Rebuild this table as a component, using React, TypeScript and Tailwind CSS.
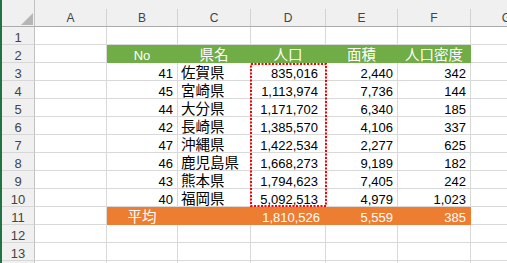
import React from "react";

const NUM = "font-['Liberation_Sans',Arial,sans-serif] text-[13px] leading-[13px]";
const JP = "font-['Noto_Sans_CJK_JP',sans-serif] text-[14.5px] leading-[17px]";

// column widths (A..G), each including its right gridline
const COLW = ["w-[72px]", "w-[71px]", "w-[73px]", "w-[75px]", "w-[72px]", "w-[73px]", "w-[72px]"];
const LETTERS = ["A", "B", "C", "D", "E", "F", "G"];

type Pref = { no: number; name: string; pop: string; area: string; density: string };

const rows: Pref[] = [
  { no: 41, name: "佐賀県", pop: "835,016", area: "2,440", density: "342" },
  { no: 45, name: "宮崎県", pop: "1,113,974", area: "7,736", density: "144" },
  { no: 44, name: "大分県", pop: "1,171,702", area: "6,340", density: "185" },
  { no: 42, name: "長崎県", pop: "1,385,570", area: "4,106", density: "337" },
  { no: 47, name: "沖縄県", pop: "1,422,534", area: "2,277", density: "625" },
  { no: 46, name: "鹿児島県", pop: "1,668,273", area: "9,189", density: "182" },
  { no: 43, name: "熊本県", pop: "1,794,623", area: "7,405", density: "242" },
  { no: 40, name: "福岡県", pop: "5,092,513", area: "4,979", density: "1,023" },
];

function RowHead({ n }: { n: number }) {
  return (
    <div className="w-[33px] h-[18px] shrink-0 bg-[#f0f0f0] border-r border-b border-r-[#c2c2c2] border-b-[#d7d7d7] flex items-end justify-center">
      <span className={`${NUM} text-[#444]`}>{n}</span>
    </div>
  );
}

function Cell({
  i,
  children,
  fill,
  align = "justify-end",
}: {
  i: number;
  children?: React.ReactNode;
  fill?: "green" | "orange";
  align?: string;
}) {
  const tone =
    fill === "green"
      ? "bg-[#70ad47] border-[#70ad47] text-white"
      : fill === "orange"
      ? "bg-[#ed7d31] border-[#ed7d31] text-white"
      : "bg-white border-[#d9d9d9] text-black";
  return (
    <div className={`${COLW[i]} h-[18px] shrink-0 border-r border-b flex items-end overflow-hidden whitespace-nowrap ${align} ${tone}`}>
      {children}
    </div>
  );
}

function EmptyRow({ n }: { n: number }) {
  return (
    <div className="flex">
      <RowHead n={n} />
      {COLW.map((_, i) => (
        <Cell key={i} i={i} />
      ))}
    </div>
  );
}

export default function App() {
  return (
    <div className="w-[507px] h-[263px] overflow-hidden bg-white flex">
      <div className="w-[2px] shrink-0 bg-[#217346]" />
      <div className="relative flex-1 flex flex-col overflow-hidden">
        {/* column headers */}
        <div className="flex h-[27px] shrink-0 bg-[#f0f0f0] border-b border-[#ababab]">
          <div className="w-[33px] shrink-0 border-r border-[#c2c2c2] flex items-end justify-end pr-[1px] pb-[1px]">
            <svg width="12" height="12" viewBox="0 0 12 12">
              <polygon points="12,0 12,12 0,12" fill="#b5b5b5" />
            </svg>
          </div>
          {LETTERS.map((l, i) => (
            <div key={l} className={`${COLW[i]} shrink-0 flex items-end`}>
              <div className="flex-1 h-[17px] flex items-center justify-center border-r border-[#d2d2d2]">
                <span className="font-['Liberation_Sans',Arial,sans-serif] text-[12px] leading-[12px] text-[#444]">{l}</span>
              </div>
            </div>
          ))}
        </div>

        <EmptyRow n={1} />

        {/* table header */}
        <div className="flex">
          <RowHead n={2} />
          <Cell i={0} />
          <Cell i={1} fill="green" align="justify-center">
            <span className={NUM}>No</span>
          </Cell>
          <Cell i={2} fill="green" align="justify-center">
            <span className={JP}>県名</span>
          </Cell>
          <Cell i={3} fill="green" align="justify-center">
            <span className={JP}>人口</span>
          </Cell>
          <Cell i={4} fill="green" align="justify-center">
            <span className={JP}>面積</span>
          </Cell>
          <Cell i={5} fill="green" align="justify-center">
            <span className={JP}>人口密度</span>
          </Cell>
          <Cell i={6} />
        </div>

        {rows.map((r, k) => (
          <div key={r.name} className="flex">
            <RowHead n={k + 3} />
            <Cell i={0} />
            <Cell i={1}>
              <span className={`${NUM} pr-[4px]`}>{r.no}</span>
            </Cell>
            <Cell i={2} align="justify-start">
              <span className={`${JP} pl-[3px]`}>{r.name}</span>
            </Cell>
            <Cell i={3}>
              <span className={`${NUM} pr-[7px]`}>{r.pop}</span>
            </Cell>
            <Cell i={4}>
              <span className={`${NUM} pr-[4px]`}>{r.area}</span>
            </Cell>
            <Cell i={5}>
              <span className={`${NUM} pr-[4px]`}>{r.density}</span>
            </Cell>
            <Cell i={6} />
          </div>
        ))}

        {/* average row */}
        <div className="flex">
          <RowHead n={11} />
          <Cell i={0} />
          <Cell i={1} fill="orange" align="justify-center">
            <span className={JP}>平均</span>
          </Cell>
          <Cell i={2} fill="orange" />
          <Cell i={3} fill="orange">
            <span className={`${NUM} pr-[5px]`}>1,810,526</span>
          </Cell>
          <Cell i={4} fill="orange">
            <span className={`${NUM} pr-[4px]`}>5,559</span>
          </Cell>
          <Cell i={5} fill="orange">
            <span className={`${NUM} pr-[4px]`}>385</span>
          </Cell>
          <Cell i={6} />
        </div>

        <EmptyRow n={12} />
        <EmptyRow n={13} />
        <EmptyRow n={14} />

        {/* copy marquee around D3:D10 */}
        <div className="absolute left-[248px] top-[63px] w-[77px] h-[144px] pointer-events-none">
          <svg width="77" height="144" viewBox="0 0 77 144">
            <rect x="1" y="1" width="75" height="142" fill="none" stroke="#ff0000" strokeWidth="2" strokeDasharray="2 1.5" />
          </svg>
        </div>
      </div>
    </div>
  );
}
